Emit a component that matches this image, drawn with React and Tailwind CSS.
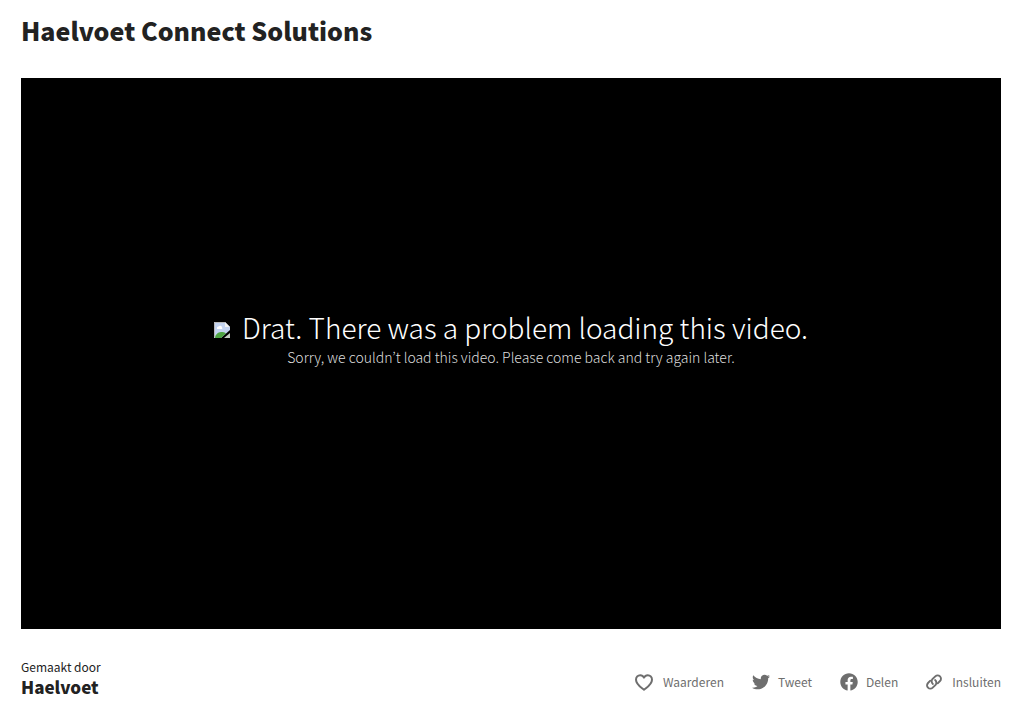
import { FaFacebook, FaTwitter } from 'react-icons/fa';

function HeartIcon() {
  return (
    <svg viewBox="0 0 18 17" className="h-[17px] w-[18px]" fill="none" stroke="currentColor" strokeWidth="2" strokeLinejoin="round" aria-hidden="true">
      <path d="M9 15.800C6.500 13.800 1 10.600 1 5.800 1 3.100 2.900 1.200 5.200 1.200c1.700 0 3.100 1 3.800 2.500.7-1.500 2.100-2.500 3.800-2.500C15.100 1.200 17 3.100 17 5.800c0 4.800-5.500 8-8 10z" />
    </svg>
  );
}

function LinkIcon() {
  return (
    <svg viewBox="0 0 16 16" className="size-4" fill="none" stroke="currentColor" strokeWidth="1.9" strokeLinecap="round" aria-hidden="true">
      <path d="M6.900 9.900A3.300 3.300 0 0 1 6.400 5.200l2.900-2.900a3.300 3.300 0 0 1 4.700 4.700l-2.300 2.300" />
      <path d="M9.100 6.100a3.300 3.300 0 0 1 .5 4.700l-2.900 2.900A3.300 3.300 0 0 1 2 9l2.300-2.300" />
    </svg>
  );
}

function BrokenImageIcon() {
  return (
    <svg viewBox="0 0 16 16" className="mt-1.5 size-4" aria-hidden="true">
      <path d="M0 0h11l5 5v3L7 16H0z" fill="#c3d3f0" />
      <path d="M.5 15.500V.5H11" fill="none" stroke="#b8b8b8" />
      <path d="M11 0v5h5z" fill="#f1f1f1" />
      <path d="M3 6.500a1.500 1.500 0 0 1 1.500-2 2 2 0 0 1 3.500 1 1 1 0 0 1 0 1.500H3z" fill="#fff" />
      <path d="M1 16c0-3 3-6 6-6 2 0 4 0 5 1.500L7 16z" fill="#4fa544" />
      <path d="M16 11v5h-6z" fill="#c6cfc6" />
    </svg>
  );
}

const actions = [
  { label: 'Waarderen', icon: <HeartIcon />, gap: 'gap-2.5' },
  { label: 'Tweet', icon: <FaTwitter size={18} />, gap: 'gap-2' },
  { label: 'Delen', icon: <FaFacebook size={18} />, gap: 'gap-2' },
  { label: 'Insluiten', icon: <LinkIcon />, gap: 'gap-2.5' },
];

export default function App() {
  return (
    <div className="min-h-screen bg-white pl-[21px] pr-[25px] pt-3 font-['Noto_Sans_CJK_KR',sans-serif] text-[#222]">
      <h1 className="text-[25px] leading-9 font-black">Haelvoet Connect Solutions</h1>

      <main className="mt-[30px] flex aspect-video w-full flex-col items-center justify-center bg-black pb-[34px] text-center">
        <div className="flex items-center gap-3 text-white">
          <BrokenImageIcon />
          <h2 className="text-[28px] leading-10 font-light">Drat. There was a problem loading this video.</h2>
        </div>
        <p className="text-sm leading-5 font-light text-[#ddd]">Sorry, we couldn’t load this video. Please come back and try again later.</p>
      </main>

      <footer className="mt-7 flex items-center justify-between">
        <div>
          <p className="text-xs leading-5">Gemaakt door</p>
          <a href="#" className="block text-[17px] leading-5 font-black">Haelvoet</a>
        </div>
        <div className="mt-2.5 flex items-center gap-7 text-xs leading-5 text-[#6e6e6e]">
          {actions.map((action) => (
            <button key={action.label} type="button" className={`flex items-center ${action.gap}`}>
              {action.icon}
              <span>{action.label}</span>
            </button>
          ))}
        </div>
      </footer>
    </div>
  );
}
